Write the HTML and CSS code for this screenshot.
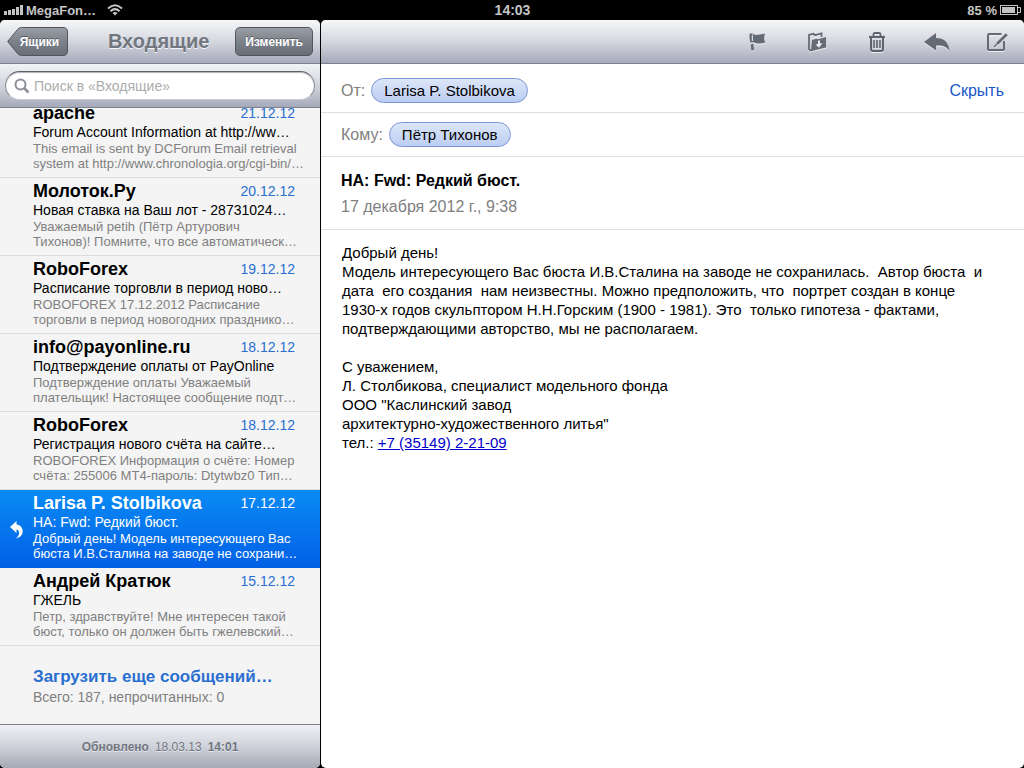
FILE: index.html
```html
<!DOCTYPE html>
<html lang="ru">
<head>
    <meta charset="UTF-8">
    <meta name="viewport" content="width=device-width, initial-scale=1.0">
    <title>Входящие</title>
    <link rel="stylesheet" href="styles.css">
</head>
<body>
    <div class="status-bar">
        <div class="status-left">
            <svg class="signal" width="19" height="10" viewBox="0 0 19 10" fill="#c4c4c4">
                <rect x="0" y="6" width="3" height="4"/>
                <rect x="4" y="5" width="3" height="5"/>
                <rect x="8" y="4" width="3" height="6"/>
                <rect x="12" y="2" width="3" height="8"/>
                <rect x="16" y="0" width="3" height="10"/>
            </svg>
            <span class="carrier">MegaFon…</span>
            <svg width="16" height="12" viewBox="0 0 16 12" fill="none" stroke="#c4c4c4" stroke-width="2">
                <path d="M1 4.500Q8 -2 15 4.500"/>
                <path d="M3.500 7.200Q8 3 12.500 7.200"/>
                <path d="M8 11.500L5.500 9Q8 7 10.500 9Z" fill="#c4c4c4" stroke="none"/>
            </svg>
        </div>
        <div class="clock">14:03</div>
        <div class="status-right">
            <span>85 %</span>
            <svg width="21" height="10" viewBox="0 0 21 10">
                <rect x="0.500" y="0.500" width="17" height="9" fill="none" stroke="#c4c4c4"/>
                <rect x="2" y="2" width="13" height="6" fill="#c4c4c4"/>
                <path d="M18 2.500H20.500V7.500H18" fill="none" stroke="#c4c4c4"/>
            </svg>
        </div>
    </div>

    <div class="app">
        <aside class="sidebar">
            <header class="bar">
                <button class="btn-back" type="button">
                    <svg class="btn-back-shape" viewBox="0 0 61 29" preserveAspectRatio="none">
                        <defs>
                            <linearGradient id="backFill" x1="0" y1="0" x2="0" y2="1">
                                <stop offset="0" stop-color="#9a9ea5"/>
                                <stop offset="0.500" stop-color="#7c828a"/>
                                <stop offset="1" stop-color="#686e78"/>
                            </linearGradient>
                        </defs>
                        <path d="M0.700 14.500L10.500 2.500Q12 0.500 14.500 0.500H56Q60.500 0.500 60.500 5V24Q60.500 28.500 56 28.500H14.500Q12 28.500 10.500 26.500Z" fill="url(#backFill)" stroke="#53565c"/>
                    </svg>
                    <span>Ящики</span>
                </button>
                <h1>Входящие</h1>
                <button class="btn-edit" type="button">Изменить</button>
            </header>

            <div class="search">
                <label class="search-box">
                    <svg width="16" height="16" viewBox="0 0 16 16" fill="none" stroke="#8a8f98">
                        <circle cx="6.500" cy="6.500" r="5" stroke-width="2"/>
                        <path d="M10 10L14.500 14.500" stroke-width="2.500"/>
                    </svg>
                    <input type="search" placeholder="Поиск в «Входящие»" aria-label="Поиск">
                </label>
            </div>

            <div class="messages">
                <article class="message">
                    <div class="message-top"><h2>apache</h2><time>21.12.12</time></div>
                    <div class="subject">Forum Account Information at http://ww…</div>
                    <p>This email is sent by DCForum Email retrieval<br>system at http://www.chronologia.org/cgi-bin/…</p>
                </article>
                <article class="message">
                    <div class="message-top"><h2>Молоток.Ру</h2><time>20.12.12</time></div>
                    <div class="subject">Новая ставка на Ваш лот - 28731024…</div>
                    <p>Уважаемый petih (Пётр Артурович<br>Тихонов)! Помните, что все автоматическ…</p>
                </article>
                <article class="message">
                    <div class="message-top"><h2>RoboForex</h2><time>19.12.12</time></div>
                    <div class="subject">Расписание торговли в период ново…</div>
                    <p>ROBOFOREX 17.12.2012 Расписание<br>торговли в период новогодних празднико…</p>
                </article>
                <article class="message">
                    <div class="message-top"><h2>info@payonline.ru</h2><time>18.12.12</time></div>
                    <div class="subject">Подтверждение оплаты от PayOnline</div>
                    <p>Подтверждение оплаты Уважаемый<br>плательщик! Настоящее сообщение подт…</p>
                </article>
                <article class="message">
                    <div class="message-top"><h2>RoboForex</h2><time>18.12.12</time></div>
                    <div class="subject">Регистрация нового счёта на сайте…</div>
                    <p>ROBOFOREX Информация о счёте: Номер<br>счёта: 255006 МТ4-пароль: Dtytwbz0 Тип…</p>
                </article>
                <article class="message selected">
                    <svg class="replied" width="14" height="18" viewBox="0 0 14 18" fill="#fff">
                        <path d="M0 6L6.500 0V3.500C11 4 13.500 8 12.500 12C11.800 15 9 17 5.500 17.500C8.500 15.500 9.500 13 9 11C8.600 9.300 7.800 8.700 6.500 8.500V12Z"/>
                    </svg>
                    <div class="message-top"><h2>Larisa P. Stolbikova</h2><time>17.12.12</time></div>
                    <div class="subject">НА: Fwd: Редкий бюст.</div>
                    <p>Добрый день! Модель интересующего Вас<br>бюста И.В.Сталина на заводе не сохрани…</p>
                </article>
                <article class="message">
                    <div class="message-top"><h2>Андрей Кратюк</h2><time>15.12.12</time></div>
                    <div class="subject">ГЖЕЛЬ</div>
                    <p>Петр, здравствуйте! Мне интересен такой<br>бюст, только он должен быть гжелевский…</p>
                </article>
                <div class="load-more">
                    <a href="#">Загрузить еще сообщений…</a>
                    <div>Всего: 187, непрочитанных: 0</div>
                </div>
            </div>

            <footer class="updated">
                <b>Обновлено</b><span>18.03.13</span><b>14:01</b>
            </footer>
        </aside>

        <main class="mail">
            <div class="bar toolbar">
                <button type="button" aria-label="Флажок">
                    <svg width="18" height="20" viewBox="0 0 18 20" fill="#656b74">
                        <path d="M5 2C8 4 11 2.500 17 1.500L16 6L17 10.500C12 12.500 9 11.500 5 10Z"/>
                        <path d="M1.500 1.800L4.500 1.200V3.500H3.800V9H5V10.500H2.200L1.500 6Z"/>
                        <path d="M2.600 12.500L5.400 11.800L6 18L3.400 18.800Z"/>
                    </svg>
                </button>
                <button type="button" aria-label="Переместить">
                    <svg width="20" height="20" viewBox="0 0 20 20">
                        <path d="M2 18V3L6.500 1.800L8 3.200L14.500 1.500V5" fill="none" stroke="#656b74" stroke-width="1.800"/>
                        <path d="M5 8L9.500 6.800L11 7.300L19 5V15.500L4 19.200Z" fill="#656b74"/>
                        <path d="M2 18.300H5" stroke="#656b74" stroke-width="1.800"/>
                        <path d="M11 8.800L13 8.300V11.500L15.500 11L12 15.800L8.500 12.600L11 12Z" fill="#eceef2"/>
                    </svg>
                </button>
                <button type="button" aria-label="Удалить">
                    <svg width="16" height="20" viewBox="0 0 16 20" fill="none" stroke="#5d636c">
                        <path d="M4.500 4V2.500Q4.500 1 6 1H10Q11.500 1 11.500 2.500V4" stroke-width="1.800"/>
                        <path d="M0 5H16" stroke-width="2.200"/>
                        <path d="M2 6V17Q2 19 4 19H12Q14 19 14 17V6" stroke-width="2"/>
                        <path d="M5 8V16M8 8V16M11 8V16" stroke-width="1.600"/>
                    </svg>
                </button>
                <button type="button" aria-label="Ответить">
                    <svg width="26" height="18" viewBox="0 0 26 18" fill="#656b74">
                        <path d="M0 9L12 0V5C20 5 25 9.500 25.500 18C22.500 13.500 18.500 12 12 12.500V17.500Z"/>
                    </svg>
                </button>
                <button type="button" aria-label="Новое сообщение">
                    <svg width="22" height="20" viewBox="0 0 22 20" fill="none" stroke="#656b74">
                        <path d="M15.500 2H3Q2 2 2 3V17Q2 18 3 18H17Q18 18 18 17V9" stroke-width="2"/>
                        <path d="M20.800 2.200L11.500 11.500" stroke-width="2.800"/>
                        <path d="M12 11L8 15" stroke-width="1.600"/>
                    </svg>
                </button>
            </div>

            <div class="field">
                <span class="field-label">От:</span>
                <a class="person" href="#">Larisa P. Stolbikova</a>
                <a class="hide" href="#">Скрыть</a>
            </div>
            <div class="field">
                <span class="field-label">Кому:</span>
                <a class="person" href="#">Пётр Тихонов</a>
            </div>
            <div class="subject-block">
                <h2>НА: Fwd: Редкий бюст.</h2>
                <time>17 декабря 2012 г., 9:38</time>
            </div>
            <div class="mail-body">Добрый день!
Модель интересующего Вас бюста И.В.Сталина на заводе не сохранилась.  Автор бюста  и
дата  его создания  нам неизвестны. Можно предположить, что  портрет создан в конце
1930-х годов скульптором Н.Н.Горским (1900 - 1981). Это  только гипотеза - фактами,
подтверждающими авторство, мы не располагаем.

С уважением,
Л. Столбикова, специалист модельного фонда
ООО "Каслинский завод
архитектурно-художественного литья"
тел.: <a href="tel:+73514922109">+7 (35149) 2-21-09</a></div>
        </main>
    </div>
</body>
</html>
```
FILE: styles.css
```css
* {
    box-sizing: border-box;
}

body {
    display: flex;
    flex-direction: column;
    height: 100vh;
    margin: 0;
    background-color: #000;
    font-family: "Liberation Sans", Arial, sans-serif;
    overflow: hidden;
}

h1, h2, p {
    margin: 0;
}

a {
    text-decoration: none;
}

button {
    font-family: inherit;
    cursor: pointer;
}

svg {
    display: block;
    flex: none;
}

/* status bar */
.status-bar {
    display: grid;
    grid-template-columns: 1fr auto 1fr;
    align-items: center;
    flex: none;
    height: 20px;
    padding: 0 3px 0 4px;
    color: #c4c4c4;
    font-size: 13px;
    font-weight: bold;
}

.status-left,
.status-right {
    display: flex;
    align-items: center;
    gap: 3px;
}

.carrier {
    margin-right: 8px;
}

.status-right {
    justify-content: flex-end;
}

.clock {
    font-size: 14px;
}

/* layout */
.app {
    display: flex;
    flex: 1;
    min-height: 0;
}

.sidebar {
    display: flex;
    flex-direction: column;
    flex: none;
    width: 320px;
    margin-right: 1px;
    background-color: #f4f4f4;
    border-radius: 5px;
    overflow: hidden;
}

.mail {
    flex: 1;
    min-width: 0;
    background-color: #fff;
    border-radius: 5px;
    overflow: hidden;
}

.bar {
    display: flex;
    align-items: center;
    justify-content: space-between;
    flex: none;
    height: 44px;
    padding: 0 7px;
    background: linear-gradient(#f6f7f9, #d5d7df 50%, #a5a9b9);
    border-bottom: 1px solid #7d8291;
}

.bar h1 {
    flex: 1;
    padding-left: 14px;
    color: #71777f;
    font-size: 20px;
    text-align: center;
    text-shadow: 0 1px 0 #f4f5f8;
}

.btn-back,
.btn-edit {
    height: 29px;
    color: #fff;
    font-size: 12px;
    font-weight: bold;
    text-shadow: 0 -1px 0 #50545b;
}

.btn-back {
    position: relative;
    width: 61px;
    padding: 0 0 0 4px;
    background: none;
    border: none;
}

.btn-back-shape {
    position: absolute;
    top: 0;
    left: 0;
    width: 100%;
    height: 100%;
}

.btn-back span {
    position: relative;
}

.btn-edit {
    padding: 0 9px;
    background: linear-gradient(#9a9ea5, #7c828a 50%, #686e78);
    border: 1px solid #53565c;
    border-radius: 5px;
}

.search {
    flex: none;
    padding: 7px 5px;
    background: linear-gradient(#f2f3f6, #cfd1da 55%, #a5a9b9);
    border-bottom: 1px solid #7d8291;
}

.search-box {
    display: flex;
    align-items: center;
    gap: 4px;
    height: 29px;
    padding: 0 8px;
    background-color: #fff;
    border: 1px solid #8d919b;
    border-top-color: #5f6268;
    border-bottom-color: #c8cad2;
    border-radius: 15px;
    box-shadow: inset 0 1px 1px #b0b2b8;
}

.search-box input {
    flex: 1;
    min-width: 0;
    padding: 1px 0;
    background: none;
    border: none;
    outline: none;
    font-family: inherit;
    font-size: 14px;
}

.search-box input::placeholder {
    color: #adadad;
}

/* message list, kept at its last rows */
.messages {
    display: flex;
    flex-direction: column;
    justify-content: flex-end;
    flex: 1;
    min-height: 0;
    overflow: hidden;
}

.message {
    position: relative;
    flex: none;
    height: 78px;
    padding: 2px 15px 0 33px;
    border-bottom: 1px solid #dcdcdc;
    white-space: nowrap;
}

.message-top {
    display: flex;
    align-items: center;
    justify-content: space-between;
    height: 22px;
    padding-right: 10px;
}

.message h2 {
    font-size: 18px;
}

.message time {
    color: #2a6fd0;
    font-size: 14px;
}

.message .subject {
    font-size: 14px;
    line-height: 17px;
}

.message p {
    color: #808080;
    font-size: 13px;
    line-height: 15px;
}

.message.selected {
    background: linear-gradient(#0a8bf5, #0160e6);
    border-bottom-color: #0160e6;
}

.message.selected h2,
.message.selected time,
.message.selected .subject,
.message.selected p {
    color: #fff;
}

.replied {
    position: absolute;
    top: 31px;
    left: 10px;
}

.load-more {
    flex: none;
    height: 78px;
    padding: 20px 15px 0 33px;
    color: #808080;
    font-size: 14px;
    line-height: 18px;
}

.load-more a {
    display: block;
    color: #2a6fd0;
    font-size: 17px;
    font-weight: bold;
    line-height: 22px;
}

.updated {
    display: flex;
    align-items: center;
    justify-content: center;
    gap: 6px;
    flex: none;
    height: 44px;
    background: linear-gradient(#f0f1f5, #cfd1da 50%, #a5a9b5);
    border-top: 1px solid #7f8288;
    color: #71777f;
    font-size: 12px;
    text-shadow: 0 1px 0 #e4e6ec;
}

/* opened mail */
.toolbar {
    justify-content: flex-end;
    gap: 34px;
    padding: 0 14px;
}

.toolbar button {
    display: flex;
    justify-content: center;
    width: 26px;
    padding: 0;
    background: none;
    border: none;
    filter: drop-shadow(0 1px 0 #eceef2);
}

.field {
    display: flex;
    align-items: center;
    gap: 6px;
    height: 44px;
    padding: 0 20px;
    border-bottom: 1px solid #dedede;
    font-size: 16px;
}

.toolbar + .field {
    height: 49px;
    padding-top: 5px;
}

.field-label {
    color: #808080;
}

.person {
    height: 25px;
    padding: 0 12px;
    background: linear-gradient(#dce6f8, #bccdf2);
    border: 1px solid #7d96d8;
    border-radius: 13px;
    color: #000;
    font-size: 15px;
    line-height: 23px;
}

.hide {
    margin-left: auto;
    color: #1858c8;
}

.subject-block {
    height: 73px;
    padding: 12px 20px 0;
    border-bottom: 1px solid #dedede;
}

.subject-block h2 {
    font-size: 16px;
    line-height: 24px;
}

.subject-block time {
    display: block;
    color: #808080;
    font-size: 16px;
    line-height: 28px;
}

.mail-body {
    padding: 13px 21px;
    font-size: 15px;
    line-height: 19px;
    white-space: pre-wrap;
}

.mail-body a {
    color: #0000cc;
    text-decoration: underline;
}
```
